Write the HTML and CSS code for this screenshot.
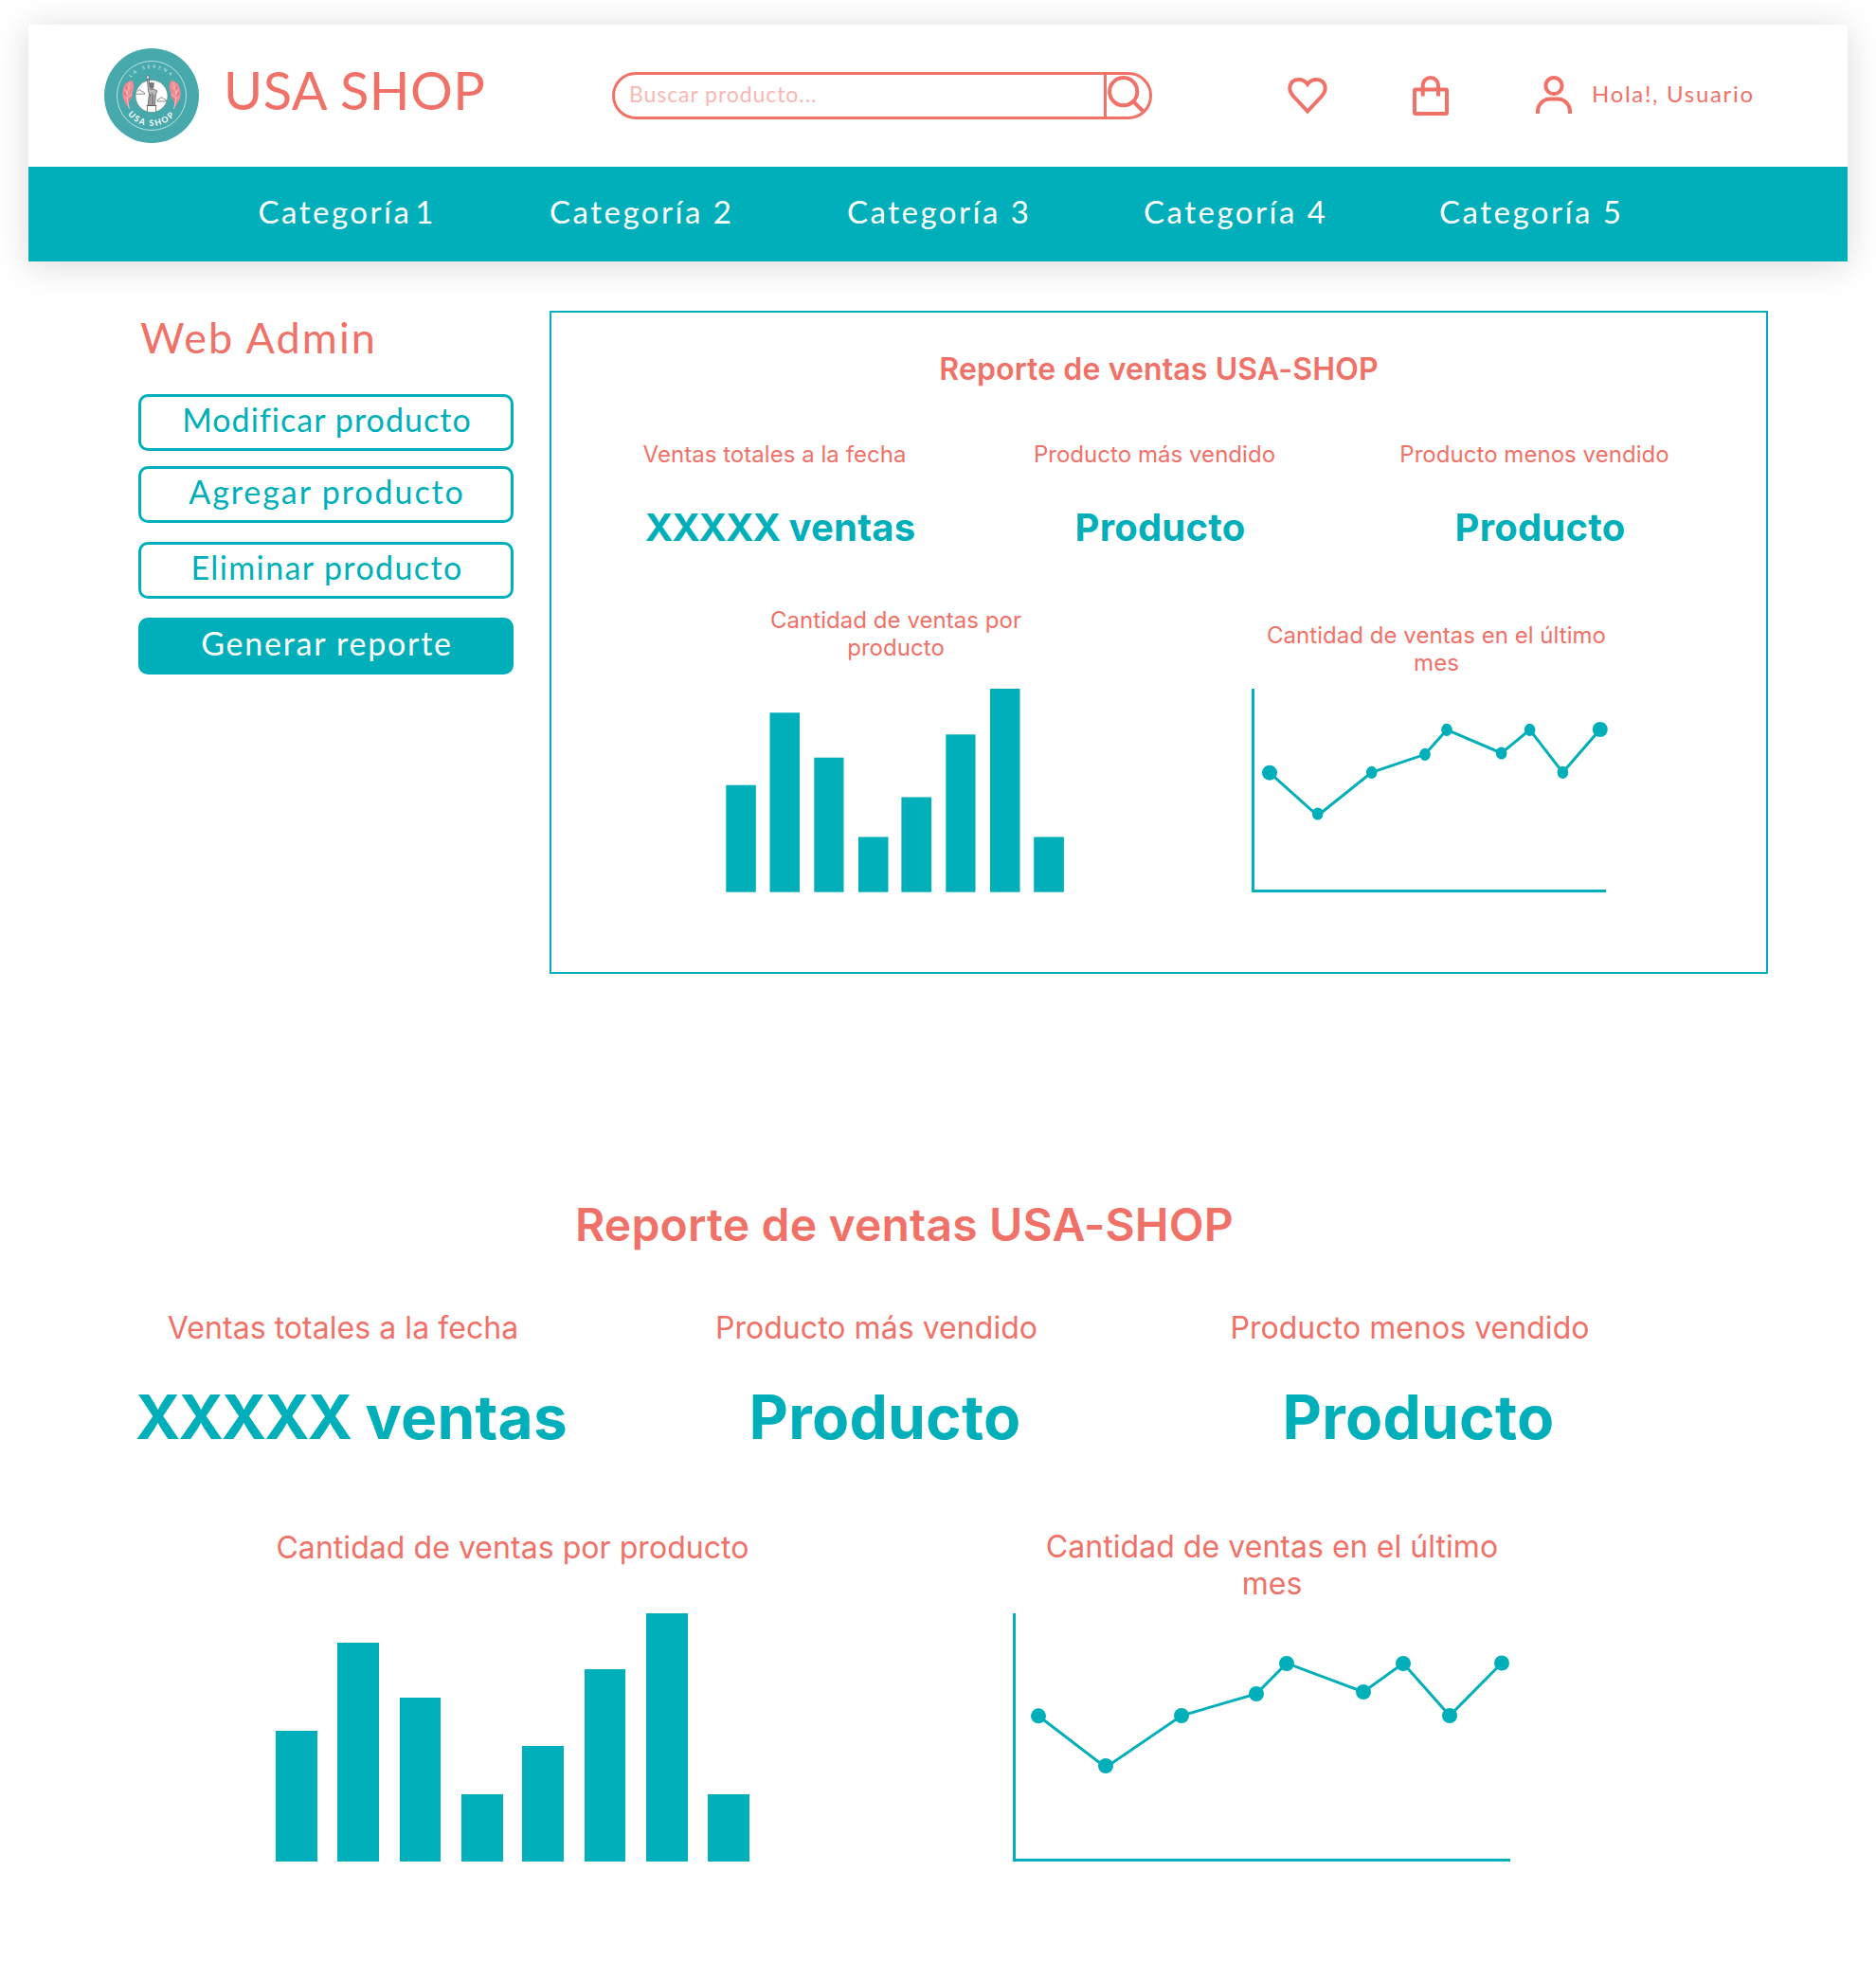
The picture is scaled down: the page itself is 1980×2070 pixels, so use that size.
FILE: index.html
```html
<!DOCTYPE html>
<html lang="es">
<head>
<meta charset="utf-8">
<title>USA SHOP - Web Admin</title>
<link rel="stylesheet" href="styles.css">
</head>
<body>
<header class="header">
  <div class="topbar">
    <svg class="logo" viewBox="0 0 100 100" role="img" aria-label="USA SHOP La Serena">
      <defs>
        <path id="arc-top" d="M21 50a29 29 0 0 1 58 0"/>
        <path id="arc-bottom" d="M18 50a32 32 0 0 0 64 0"/>
      </defs>
      <circle cx="50" cy="50" r="50" fill="#48a9ac"/>
      <circle cx="50" cy="50" r="36.5" fill="none" stroke="#d8eff0" stroke-width=".8"/>
      <circle cx="50" cy="50.5" r="17" fill="#fff" stroke="#55777a" stroke-width=".6"/>
      <text class="logo-city"><textPath href="#arc-top" startOffset="50%">LA SERENA</textPath></text>
      <text class="logo-name"><textPath href="#arc-bottom" startOffset="50%">USA SHOP</textPath></text>
      <g id="feather">
        <path d="M26 63.5C24 59 18.5 54 19.500 46C20 40 23 34.500 29 34C32 37 31.500 43 29.500 47C30.500 51 27 54 26 57Z" fill="#f08a92"/>
        <path d="M27.500 36C24 43 22.500 50 26.500 64M28.500 40l-3 4M22 43l2 5M29 48l-4 4M21 50l4 4" fill="none" stroke="#f9c5c8" stroke-width=".8"/>
        <path d="M21 46l3 6M23 40l1.500 4M28 52l-2.500 3" fill="none" stroke="#e2606f" stroke-width="1"/>
      </g>
      <use href="#feather" transform="matrix(-1 0 0 1 100 0)"/>
      <g fill="#fff" stroke="#555" stroke-width=".7" stroke-linejoin="round">
        <path d="M34 48.200h8.800c0-2-2-2.500-3-2.200c-.5-2.500-4-2.500-4.600-.5M56 56h9.500c0-2-1.500-2.500-2.500-2.300c-1-2.700-4.500-2-4.700 0c-1.500-.2-2.300.8-2.300 2.300Z"/>
        <path d="M45.500 67v-6.500h9v6.500M44.500 60.500h11"/>
        <path d="M45.500 33l1 12l1 3l-1.500 12h7.500l1-12l1.500-3l-3.500-2l-4 .5l-1.500-11Z" fill="#bbb"/>
        <path d="M44.800 32.500h2.600l-.4-3l-1-1.500l-1 1.500Z"/>
        <path d="M48.500 39l-.8-2.500l1.600 1l.7-1.700l.9 1.600l1.500-.9l-.4 2.300v2.500l-1.600 1.500l-1.600-1.500Z" fill="#777"/>
        <path d="M48.500 48l-.5 11M50.500 47v12M52.300 49l-.5 10" fill="none"/>
      </g>
    </svg>
    <h1 class="brand">USA SHOP</h1>
    <form class="search">
      <span class="search-text">Buscar producto...</span>
      <span class="search-btn">
        <svg viewBox="0 0 45 44" width="45" height="44"><circle cx="17.700" cy="17.700" r="14.600"/><path d="M28 28l12 12"/></svg>
      </span>
    </form>
    <svg class="icon icon-heart" viewBox="0 0 48 48"><path d="M24 40.500L9 24.500C1.500 16 6.500 7 14.500 7C19 7 22 9 24 12C26 9 29 7 33.500 7C41.500 7 46.500 16 39 24.500Z"/></svg>
    <svg class="icon" viewBox="0 0 48 48"><rect x="7" y="17.500" width="34" height="25.500" rx="1"/><path d="M15.700 24.500V13a8.150 8 0 0 1 16.300 0V24.500"/></svg>
    <svg class="icon" viewBox="0 0 48 48"><circle cx="24" cy="13.600" r="8.600"/><path d="M7 43v-2.500a13 13 0 0 1 13-13h8a13 13 0 0 1 13 13v2.500"/></svg>
    <span class="greeting">Hola!, Usuario</span>
  </div>
  <nav class="nav">
    <a class="nav-first">Categoría 1</a>
    <a>Categoría 2</a>
    <a>Categoría 3</a>
    <a>Categoría 4</a>
    <a>Categoría 5</a>
  </nav>
</header>

<main>
  <div class="admin">
    <aside class="sidebar">
      <h2 class="sidebar-title">Web Admin</h2>
      <button class="btn btn-modify">Modificar producto</button>
      <button class="btn btn-add">Agregar producto</button>
      <button class="btn btn-delete">Eliminar producto</button>
      <button class="btn btn-active">Generar reporte</button>
    </aside>

    <section class="report report-panel">
      <h3 class="report-title">Reporte de ventas USA-SHOP</h3>
      <div class="kpis">
        <div class="kpi"><p class="kpi-label">Ventas totales a la fecha</p><p class="kpi-value"><span class="amount">XXXXX</span> ventas</p></div>
        <div class="kpi"><p class="kpi-label">Producto más vendido</p><p class="kpi-value">Producto</p></div>
        <div class="kpi"><p class="kpi-label">Producto menos vendido</p><p class="kpi-value">Producto</p></div>
      </div>
      <div class="charts">
        <figure class="chart chart-bars">
          <figcaption>Cantidad de ventas por<br>producto</figcaption>
          <svg viewBox="766 727 357 215" width="357" height="215" fill="#00afb9">
            <rect x="766.300" y="828.700" width="31.500" height="113"/>
            <rect x="812.500" y="752.300" width="31.500" height="189.400"/>
            <rect x="859.300" y="799.700" width="31.200" height="142"/>
            <rect x="906" y="883.500" width="31.500" height="58.200"/>
            <rect x="951.400" y="841.500" width="31.700" height="100.200"/>
            <rect x="998.300" y="775.300" width="31.200" height="166.400"/>
            <rect x="1045" y="727" width="31.500" height="214.700"/>
            <rect x="1091.200" y="883.500" width="31.700" height="58.200"/>
          </svg>
        </figure>
        <figure class="chart chart-line">
          <figcaption>Cantidad de ventas en el último<br>mes</figcaption>
          <svg viewBox="1321 727 376 215" width="376" height="215" fill="#00afb9">
            <path class="stroke" d="M1322.500 727V940.400H1695"/>
            <path class="stroke" d="M1340 815.700L1390.700 861L1447.700 815.300L1504 796.300L1527 770.300L1584.700 795L1614.600 770.300L1649.400 815.300L1688.800 770"/>
            <circle cx="1340" cy="815.700" r="8"/>
            <ellipse cx="1390.700" cy="859" rx="5.800" ry="6.600"/>
            <ellipse cx="1447.700" cy="815.300" rx="5.800" ry="6.600"/>
            <ellipse cx="1504" cy="796.300" rx="5.800" ry="6.600"/>
            <ellipse cx="1527" cy="770.300" rx="5.800" ry="6.600"/>
            <ellipse cx="1584.700" cy="795" rx="5.800" ry="6.600"/>
            <ellipse cx="1614.600" cy="770.300" rx="5.800" ry="6.600"/>
            <ellipse cx="1649.400" cy="815.300" rx="5.800" ry="6.600"/>
            <circle cx="1688.800" cy="770" r="8"/>
          </svg>
        </figure>
      </div>
    </section>
  </div>

  <section class="report report-full">
    <h3 class="report-title">Reporte de ventas USA-SHOP</h3>
    <div class="kpis">
      <div class="kpi"><p class="kpi-label">Ventas totales a la fecha</p><p class="kpi-value"><span class="amount">XXXXX</span> ventas</p></div>
      <div class="kpi"><p class="kpi-label">Producto más vendido</p><p class="kpi-value">Producto</p></div>
      <div class="kpi"><p class="kpi-label">Producto menos vendido</p><p class="kpi-value">Producto</p></div>
    </div>
    <div class="charts">
      <figure class="chart chart-bars">
        <figcaption>Cantidad de ventas por producto</figcaption>
        <svg viewBox="291 1703 500 262" width="500" height="262" fill="#00afb9">
          <rect x="291" y="1827" width="44" height="138"/>
          <rect x="356" y="1734" width="44" height="231"/>
          <rect x="422" y="1792" width="43" height="173"/>
          <rect x="487" y="1894" width="44" height="71"/>
          <rect x="551" y="1843" width="44" height="122"/>
          <rect x="617" y="1762" width="43" height="203"/>
          <rect x="682" y="1703" width="44" height="262"/>
          <rect x="747" y="1894" width="44" height="71"/>
        </svg>
      </figure>
      <figure class="chart chart-line">
        <figcaption>Cantidad de ventas en el último<br>mes</figcaption>
        <svg viewBox="1069 1703 525 262" width="525" height="262" fill="#00afb9">
          <path class="stroke" d="M1070.500 1703V1963.500H1594"/>
          <path class="stroke" d="M1096 1811.300L1167 1865.700L1247 1811L1326 1788L1358 1755.700L1439 1786L1481 1755.700L1530 1811L1585 1755.500"/>
          <circle cx="1096" cy="1811.300" r="8"/>
          <circle cx="1167" cy="1864" r="8"/>
          <circle cx="1247" cy="1811" r="8"/>
          <circle cx="1326" cy="1788" r="8"/>
          <circle cx="1358" cy="1756" r="8"/>
          <circle cx="1439" cy="1786" r="8"/>
          <circle cx="1481" cy="1756" r="8"/>
          <circle cx="1530" cy="1811" r="8"/>
          <circle cx="1585" cy="1755.500" r="8"/>
        </svg>
      </figure>
    </div>
  </section>
</main>
</body>
</html>
```
FILE: styles.css
```css
* { box-sizing: border-box; }

body {
  margin: 0;
  padding: 26px 30px 0;
  background: #fff;
  color: #f07167;
  font-family: Lato, sans-serif;
}

h1, h2, h3, p, figure { margin: 0; font-weight: 400; }
svg { display: block; flex: none; }

/* Header */
.header { box-shadow: 0 4px 35px rgba(0, 0, 0, .15); }

.topbar {
  display: flex;
  align-items: center;
  height: 150px;
  padding-left: 80px;
  background: #fff;
  white-space: nowrap;
}

.logo { width: 100px; height: 100px; }
.logo-city, .logo-name { fill: #fff; text-anchor: middle; }
.logo-city { font-size: 4.8px; letter-spacing: 2.7px; fill: #d8eff0; }
.logo-name { font-size: 8.8px; font-weight: 700; letter-spacing: 1.8px; }

.brand {
  width: 410px;
  margin-left: 26px;
  padding-bottom: 13px;
  font-size: 56px;
  line-height: 67px;
  letter-spacing: .45px;
}

.search {
  display: flex;
  width: 570px;
  height: 50px;
  border: 3px solid #f07167;
  border-radius: 25px;
  overflow: hidden;
}
.search-text {
  flex: 1;
  padding-left: 15px;
  font-size: 23px;
  line-height: 40px;
  letter-spacing: .93px;
  color: #f8b8b3;
}
.search-btn { width: 48px; border-left: 3px solid #f07167; }
.search-btn svg, .icon { fill: none; stroke: #f07167; stroke-width: 4; }

.icon { width: 48px; height: 48px; margin-left: 82px; }
.icon-heart { margin-left: 140px; }
.greeting {
  margin-left: 16px;
  padding-bottom: 5px;
  font-size: 24px;
  letter-spacing: 1.69px;
}

.nav {
  display: grid;
  grid-template-columns: 307.5px 314px 313px 312px 1fr;
  height: 100px;
  padding-left: 242.5px;
  background: #00afb9;
  color: #fff;
  font-size: 33px;
  line-height: 94px;
  letter-spacing: 2.5px;
}
.nav-first { word-spacing: -7px; }

/* Sidebar */
.admin { display: flex; padding: 52px 0 0 116px; }
.sidebar { display: flex; flex-direction: column; width: 396px; }
.sidebar-title {
  margin: 1px 0 33px 2px;
  font-size: 45px;
  line-height: 54px;
  letter-spacing: 2.1px;
}
.btn {
  height: 60px;
  margin-bottom: 20px;
  padding: 0 0 7px 2px;
  border: 3px solid #00afb9;
  border-radius: 10px;
  background: #fff;
  color: #00afb9;
  font-family: inherit;
  font-size: 34px;
  line-height: 42px;
}
.btn-modify { margin-bottom: 16px; letter-spacing: 1.05px; }
.btn-add { letter-spacing: 1.91px; }
.btn-delete { letter-spacing: 1.38px; }
.btn-active { background: #00afb9; color: #fff; letter-spacing: 1.75px; }

/* Reports */
.report { font-family: Inter, sans-serif; text-align: center; }
.report-title { font-weight: 600; }
.kpis, .charts { display: flex; }
.kpi-value { color: #00afb9; font-weight: 700; }
.charts { align-items: flex-end; }
.stroke { fill: none; stroke: #00afb9; stroke-width: 3; }

.report-panel {
  width: 1286px;
  height: 700px;
  margin-left: 38px;
  padding-top: 41.4px;
  border: 2px solid #00afb9;
}
.report-panel .report-title { font-size: 32px; line-height: 38px; letter-spacing: .12px; }
.report-panel .kpis { padding: 55.6px 0 0 35px; }
.report-panel .kpi { width: 401px; }
.report-panel .kpi-label { font-size: 24px; line-height: 29px; letter-spacing: .04px; }
.report-panel .kpi-value {
  margin-top: 39px;
  padding-left: 12px;
  font-size: 40px;
  line-height: 48px;
  letter-spacing: .2px;
}
.report-panel .amount { letter-spacing: -1.1px; }
.report-panel .charts { height: 361px; padding-left: 184px; }
.report-panel figcaption { font-size: 24px; line-height: 29px; letter-spacing: .04px; }
.report-panel .chart-bars figcaption { padding: 0 0 29.2px 2px; }
.report-panel .chart-line { width: 376px; margin-left: 198px; }
.report-panel .chart-line figcaption { padding: 0 0 13.2px 14px; }

.report-full { width: 1748px; margin: 235.5px 0 0 50.5px; }
.report-full .report-title { font-size: 48px; line-height: 58px; letter-spacing: .18px; }
.report-full .kpis { padding-top: 60.4px; }
.report-full .kpi { width: 563px; }
.report-full .kpi-label { font-size: 32px; line-height: 39px; letter-spacing: .05px; }
.report-full .kpi-value {
  margin-top: 36.3px;
  padding-left: 18px;
  font-size: 64px;
  line-height: 77px;
  letter-spacing: .25px;
}
.report-full .amount { letter-spacing: -1.8px; }
.report-full .charts { height: 430.8px; padding-left: 210.5px; }
.report-full figcaption { height: 90.1px; font-size: 32px; line-height: 39px; letter-spacing: .05px; }
.report-full .chart-bars figcaption { padding-top: .8px; }
.report-full .chart-line { margin-left: 278px; }
.report-full .chart-line figcaption { padding-left: 22px; }
```
